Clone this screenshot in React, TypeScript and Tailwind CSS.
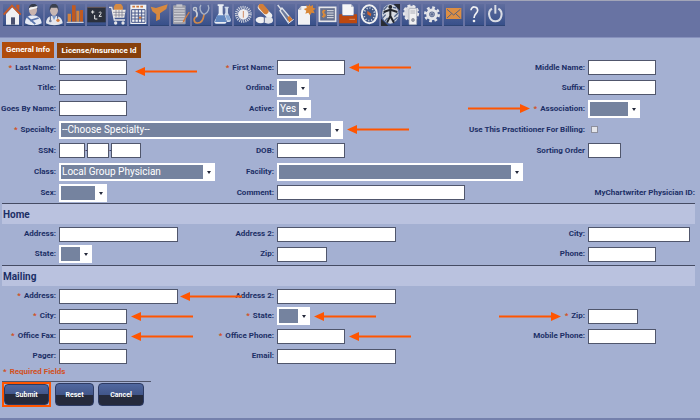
import type { ReactNode } from "react";

const toolbar: { name: string; art: ReactNode }[] = [
  {
    name: "Home",
    art: (
      <>
        <path d="M9 30 L28 10 L48 30 V62 H9 Z" fill="#f1f1f3" />
        <path d="M24 40 h12 v22 h-12 Z" fill="#4a5170" />
        <path d="M2 32 L27 5 L53 32" fill="none" stroke="#c85a26" strokeWidth="6" />
        <path d="M40 2 h9 v18 l-9 -8 Z" fill="#c85a26" />
      </>
    ),
  },
  {
    name: "Patients",
    art: (
      <>
        <path d="M3 58 C3 42 12 34 26 34 C42 34 52 42 53 58 C40 66 16 66 3 58 Z" fill="#e7ebf5" />
        <path d="M8 38 L34 60 M18 50 L44 42" stroke="#5b76ad" strokeWidth="5" fill="none" />
        <ellipse cx="27" cy="18" rx="12" ry="16" fill="#c9b4ae" />
        <path d="M14 16 C14 -6 41 -6 41 14 L36 10 L20 8 Z" fill="#343a48" />
        <path d="M15 12 L40 6 V12 L16 18 Z" fill="#f4f4f4" />
      </>
    ),
  },
  {
    name: "Practitioners",
    art: (
      <>
        <path d="M3 58 C3 42 12 35 27 35 C42 35 52 42 53 58 C40 66 16 66 3 58 Z" fill="#e4e6ec" />
        <path d="M21 35 L27 48 L34 35 Z" fill="#7c98c8" />
        <path d="M16 36 V48 M38 36 V44" stroke="#4d587a" strokeWidth="3" />
        <circle cx="39" cy="49" r="5" fill="#d77c3e" />
        <circle cx="16" cy="51" r="4" fill="#6c7898" />
        <ellipse cx="27" cy="19" rx="12" ry="16" fill="#c9b8b4" />
        <path d="M14 20 C10 -8 44 -8 40 20 L37 11 H18 Z" fill="#3b414e" />
      </>
    ),
  },
  {
    name: "Reports",
    art: (
      <>
        <path d="M5 29 h10 v24 h-10 Z M31 20 h9 v33 h-9 Z" fill="#d2843f" />
        <path d="M18 4 h11 v49 h-11 Z M42 18 h9 v35 h-9 Z" fill="#c05a20" />
        <path d="M2 55 h51" stroke="#e6e6e8" strokeWidth="3" />
      </>
    ),
  },
  {
    name: "Education",
    art: (
      <>
        <rect x="1" y="10" width="55" height="45" fill="#2b303c" />
        <path d="M1 10 h55" stroke="#80614f" strokeWidth="2" />
        <path d="M17 19 v10 M12 24 h10 M23 33 v12 h8 M36 26 c4 -5 8 -1 5 4 l-5 7 h8" fill="none" stroke="#e9e9ea" strokeWidth="3" />
      </>
    ),
  },
  {
    name: "Supplies",
    art: (
      <>
        <circle cx="31" cy="12" r="14" fill="#d58a42" />
        <path d="M3 10 h8 l8 38 h32" fill="none" stroke="#e5e5e8" strokeWidth="4" />
        <path d="M12 17 h41 l-4 24 h-32 Z" fill="#ece9e6" />
        <path d="M15 25 h36 M17 33 h33 M24 18 v22 M33 18 v22 M42 18 v22" stroke="#6e7188" strokeWidth="2" />
        <circle cx="23" cy="57" r="5" fill="#e5e5e8" />
        <circle cx="45" cy="57" r="5" fill="#e5e5e8" />
      </>
    ),
  },
  {
    name: "Calendar",
    art: (
      <>
        <rect x="4" y="2" width="48" height="58" fill="#eff0f3" />
        <path d="M10 8 h36" stroke="#d17a3c" strokeWidth="5" strokeDasharray="8 4" />
        <path d="M8 17 h40 v38 h-40 Z M8 27 h40 M8 36 h40 M8 45 h40 M18 17 v38 M28 17 v38 M38 17 v38" fill="none" stroke="#4a5a8b" strokeWidth="3" />
        <rect x="30" y="38" width="7" height="6" fill="#d17a3c" />
      </>
    ),
  },
  {
    name: "Filters",
    art: <path d="M2 8 L18 12 L53 1 L49 15 L30 28 L30 46 L18 51 L19 31 L7 22 Z" fill="#d6893f" />,
  },
  {
    name: "Charting",
    art: (
      <>
        <rect x="6" y="4" width="38" height="57" rx="3" fill="#9c9da8" />
        <path d="M9 13 h32 M9 21 h32 M9 29 h32 M9 37 h32 M9 45 h32 M9 53 h32" stroke="#d7d7dc" strokeWidth="3" />
        <rect x="16" y="1" width="18" height="7" fill="#c7c7cd" />
        <path d="M55 24 L37 52" stroke="#d07c40" strokeWidth="4" />
        <path d="M38 48 l-4 8 l8 -4 Z" fill="#d07c40" />
      </>
    ),
  },
  {
    name: "Exams",
    art: (
      <>
        <path d="M27 3 C21 10 24 26 36 32 C48 27 54 14 48 3" fill="none" stroke="#a9b3c8" strokeWidth="4" />
        <path d="M36 32 C34 48 26 58 15 57 C4 55 4 42 13 39" fill="none" stroke="#d18a4b" strokeWidth="5" />
        <path d="M13 39 C17 33 15 25 10 19" fill="none" stroke="#cfd2da" strokeWidth="5" />
        <circle cx="9" cy="15" r="7" fill="#c2c6d2" />
        <circle cx="9" cy="15" r="3" fill="#73809c" />
      </>
    ),
  },
  {
    name: "Labs",
    art: (
      <>
        <path d="M14 1 h18 v5 h-3 v22 l10 22 c3 7 -1 9 -6 9 h-22 c-6 0 -8 -4 -6 -9 l12 -22 v-22 h-3 Z" fill="#e9edf4" />
        <path d="M12 34 h22 l6 20 h-34 Z" fill="#5f86bf" />
        <path d="M35 8 h12 v5 h-2 v14 l8 18 c2 6 0 9 -5 9 h-6 l-8 -22 l3 -6 v-13 h-2 Z" fill="#cfdaea" />
        <path d="M37 34 h11 l5 15 h-10 Z" fill="#8aabd6" />
      </>
    ),
  },
  {
    name: "Immunology",
    art: (
      <>
        <circle cx="28" cy="31" r="21" fill="none" stroke="#d6d9e2" strokeWidth="9" strokeDasharray="3 3" />
        <circle cx="28" cy="31" r="16" fill="#eeeef1" />
        <path d="M28 21 v20" stroke="#d18c65" strokeWidth="3" />
      </>
    ),
  },
  {
    name: "Medications",
    art: (
      <>
        <path d="M17 10 L43 35" stroke="#efefef" strokeWidth="17" strokeLinecap="round" />
        <path d="M19 7 L32 22" stroke="#d27e38" strokeWidth="17" strokeLinecap="round" />
        <ellipse cx="17" cy="48" rx="15" ry="10" fill="#f0f0f2" />
        <ellipse cx="40" cy="49" rx="14" ry="10" fill="#e2e3e8" />
        <path d="M28 42 v13" stroke="#59678e" strokeWidth="3" />
      </>
    ),
  },
  {
    name: "Injections",
    art: (
      <>
        <path d="M5 3 L17 18" stroke="#dde0e6" strokeWidth="4" />
        <path d="M18 12 L12 20 L36 55 L46 45 Z" fill="#6d7b9d" stroke="#dfe3ea" strokeWidth="4" />
        <path d="M34 40 L41 36 L50 47 L40 57 Z" fill="#d27a34" />
        <path d="M36 59 L53 46" stroke="#e6e6ea" strokeWidth="3" />
      </>
    ),
  },
  {
    name: "New Document",
    art: (
      <>
        <path d="M3 18 L13 6 H39 V62 H3 Z" fill="#f1f1f3" />
        <path d="M3 18 H13 V6 Z" fill="#bcbfcc" />
        <path d="M36 -1 L40 7 L48 3 L48 11 L56 14 L49 19 L53 28 L44 26 L39 34 L34 26 L25 29 L28 20 L20 15 L29 12 L28 3 L35 7 Z" fill="#d88635" />
      </>
    ),
  },
  {
    name: "Billing",
    art: (
      <>
        <rect x="4" y="10" width="49" height="42" fill="#66718f" stroke="#e5e5e9" strokeWidth="5" />
        <path d="M22 21 c-6 -5 -11 2 -6 7 c7 2 9 11 -4 9 M17 17 v24" fill="none" stroke="#d98a3b" strokeWidth="4" />
        <path d="M27 20 h20 M27 27 h20 M27 34 h20 M27 41 h20" stroke="#dedfe4" strokeWidth="3" />
      </>
    ),
  },
  {
    name: "Print",
    art: (
      <>
        <path d="M10 1 H36 L44 9 V34 H10 Z" fill="#f6f6f7" />
        <path d="M36 1 V9 H44 Z" fill="#b9bdca" />
        <path d="M1 31 H10 V36 H44 V31 H54 V58 H1 Z" fill="#bd480f" />
        <path d="M31 46 h17" stroke="#db9066" strokeWidth="3" />
      </>
    ),
  },
  {
    name: "Navigator",
    art: (
      <>
        <ellipse cx="28" cy="31" rx="23" ry="27" fill="#415887" stroke="#f0f0f2" strokeWidth="6" />
        <ellipse cx="28" cy="31" rx="16" ry="19" fill="none" stroke="#dfe2ea" strokeWidth="5" strokeDasharray="3 6" />
        <path d="M22 20 L34 29 L32 37 L22 31 Z" fill="#d2642b" />
      </>
    ),
  },
  {
    name: "Anatomy",
    art: (
      <>
        <path d="M34 -4 h23 v24 Z M0 44 L22 66 H0 Z" fill="#272b34" />
        <ellipse cx="28" cy="30" rx="25" ry="29" fill="#d7dbe2" />
        <path d="M8 18 L20 5 M6 30 L14 22 M5 42 L14 32 M12 51 L20 42 M36 52 L50 40 M40 38 L52 26 M36 10 L46 12" stroke="#53668a" strokeWidth="4" />
        <circle cx="28" cy="9" r="6" fill="#22262e" />
        <path d="M8 24 L25 18 H31 L49 24 M28 18 V36 L18 56 M28 36 L39 56" fill="none" stroke="#22262e" strokeWidth="6" />
      </>
    ),
  },
  {
    name: "System",
    art: (
      <>
        <ellipse cx="27" cy="27" rx="21" ry="22" fill="#d9dae0" stroke="#e7e7eb" strokeWidth="7" strokeDasharray="9 6" />
        <rect x="21" y="14" width="23" height="48" rx="2" fill="#f1f1f2" stroke="#9ca0ad" strokeWidth="2" />
        <path d="M25 21 h15 M25 27 h15" stroke="#8b8e9b" strokeWidth="2" />
        <circle cx="33" cy="48" r="5" fill="#65697a" />
        <circle cx="33" cy="48" r="2" fill="#f1f1f2" />
      </>
    ),
  },
  {
    name: "Settings",
    art: (
      <>
        <circle cx="27" cy="31" r="20" fill="none" stroke="#e4e5e9" strokeWidth="8" strokeDasharray="8 7.7" />
        <circle cx="27" cy="31" r="13" fill="#5b6a91" stroke="#e4e5e9" strokeWidth="9" />
        <circle cx="27" cy="31" r="5" fill="none" stroke="#b4b9c8" strokeWidth="2" />
      </>
    ),
  },
  {
    name: "Messages",
    art: (
      <>
        <rect x="6" y="12" width="46" height="33" fill="#dc8e43" />
        <path d="M9 16 L29 33 L49 16 M9 42 L23 29 M49 42 L35 29" fill="none" stroke="#58617f" strokeWidth="3" />
      </>
    ),
  },
  {
    name: "Help",
    art: (
      <>
        <path d="M18 19 C18 5 38 6 38 19 C38 28 27 29 27 42" fill="none" stroke="#f1f1f3" strokeWidth="5" />
        <circle cx="27" cy="51" r="4" fill="#f1f1f3" />
      </>
    ),
  },
  {
    name: "Log Out",
    art: (
      <>
        <path d="M18 14 C2 24 10 52 28 52 C47 52 54 24 37 14" fill="none" stroke="#d9dce4" strokeWidth="6" />
        <path d="M28 3 V29" stroke="#d9dce4" strokeWidth="6" />
      </>
    ),
  },
];

function Arrow({ right = false, className = "" }: { right?: boolean; className?: string }) {
  return (
    <svg viewBox="0 0 62 11" className={`h-[11px] w-[62px] shrink-0 ${className}`} aria-hidden="true">
      {right ? (
        <path d="M0 4.5 H52 V1 L62 5.5 L52 10 V6.5 H0 Z" fill="#ff5500" />
      ) : (
        <path d="M62 4.5 H10 V1 L0 5.5 L10 10 V6.5 H62 Z" fill="#ff5500" />
      )}
    </svg>
  );
}

type LabelProps = { id: string; children: ReactNode; required?: boolean; arrow?: boolean; className?: string };

function Label({ id, children, required, arrow, className = "" }: LabelProps) {
  return (
    <div className={`flex items-center justify-end gap-1 whitespace-nowrap ${className}`}>
      {arrow && <Arrow right />}
      <label htmlFor={id}>
        {required && <span className="mr-[3px] text-[#d2501e]">*</span>}
        {children}
      </label>
    </div>
  );
}

function TextBox({ id, width = "w-[68px]", label }: { id: string; width?: string; label?: string }) {
  return (
    <input
      id={id}
      type="text"
      aria-label={label}
      className={`h-[15px] shrink-0 border border-[#50566c] bg-white px-1 text-[8px] ${width}`}
    />
  );
}

function Select({ id, width, value = "" }: { id: string; width: string; value?: string }) {
  return (
    <div className={`relative h-[18px] shrink-0 bg-white py-[2px] pr-3 pl-[2px] ${width}`}>
      <select
        id={id}
        className="block h-[14px] w-full appearance-none bg-[#75839f] pl-px text-[10px] leading-[14px] font-normal text-white"
      >
        <option>{value}</option>
      </select>
      <svg viewBox="0 0 4 3" className="pointer-events-none absolute top-2 right-1 h-[3px] w-1">
        <path d="M0 0 H4 L2 3 Z" fill="#23283a" />
      </svg>
    </div>
  );
}

function Field({ children, className = "" }: { children: ReactNode; className?: string }) {
  return <div className={`flex min-w-0 items-center ${className}`}>{children}</div>;
}

function SectionTitle({ children }: { children: ReactNode }) {
  return (
    <h2 className="mr-[5px] ml-[2px] h-[21px] border-t border-[#454b63] bg-[#bac2df] pt-[3px] pl-px text-[10px] leading-4 font-bold">
      {children}
    </h2>
  );
}

type ActionButtonProps = { children: string; size: string; type?: "button" | "submit" | "reset" };

function ActionButton({ children, size, type = "button" }: ActionButtonProps) {
  return (
    <button
      type={type}
      className={`rounded-[4px] border border-[#2c3a63] bg-linear-to-b from-[#5068a0] from-0% via-[#42568a] via-50% to-[#252a3c] to-50% text-[7px] font-bold text-white ${size}`}
    >
      {children}
    </button>
  );
}

const columns =
  "grid grid-cols-[56px_minmax(0,158fr)_54px_minmax(0,189fr)_116px_minmax(0,107fr)] gap-x-[3px] pr-[5px]";

export default function App() {
  return (
    <div className="flex min-h-screen flex-col border-b-2 border-[#7480ac] bg-[#a4b0d2] font-[Roboto,'Liberation_Sans',sans-serif] text-[8px] leading-3 font-bold text-[#1c2f66]">
      <header className="h-[38px] border-t border-b border-t-[#a2a5b8] border-b-[#8791bd] bg-[#6873a3] pt-[3px] pl-[3px]">
        <nav className="flex gap-[2px]" aria-label="Main">
          {toolbar.map(({ name, art }) => (
            <button
              key={name}
              type="button"
              aria-label={name}
              className="h-[22px] w-[19px] border-b border-[#2f4575] bg-linear-to-b from-[#5f6d9e] to-[#38508a]"
            >
              <svg viewBox="0 0 57 66" className="block h-[22px] w-[19px]">
                {art}
              </svg>
            </button>
          ))}
        </nav>
      </header>

      <div className="flex h-5 items-end gap-[3px] pl-[2px] text-white">
        <button type="button" className="h-4 w-[52px] bg-[#b04c0c] whitespace-nowrap">
          General Info
        </button>
        <button type="button" className="h-[15px] w-[84px] bg-[#87400c] whitespace-nowrap">
          License/Insurance Id
        </button>
      </div>

      <form className="flex-1" onSubmit={(e) => e.preventDefault()}>
        <div className={`${columns} grid-rows-[19px_repeat(6,21px)]`}>
          <Label id="lastName" required>Last Name:</Label>
          <Field>
            <TextBox id="lastName" />
            <Arrow className="ml-2 self-end" />
          </Field>
          <Label id="firstName" required>First Name:</Label>
          <Field>
            <TextBox id="firstName" />
            <Arrow className="ml-1" />
          </Field>
          <Label id="middleName">Middle Name:</Label>
          <Field><TextBox id="middleName" /></Field>

          <Label id="title">Title:</Label>
          <Field><TextBox id="title" /></Field>
          <Label id="ordinal">Ordinal:</Label>
          <Field><Select id="ordinal" width="w-8" /></Field>
          <Label id="suffix">Suffix:</Label>
          <Field><TextBox id="suffix" /></Field>

          <Label id="goesBy">Goes By Name:</Label>
          <Field><TextBox id="goesBy" /></Field>
          <Label id="active">Active:</Label>
          <Field><Select id="active" width="w-[34px]" value="Yes" /></Field>
          <Label id="association" required arrow>Association:</Label>
          <Field><Select id="association" width="w-[52px]" /></Field>

          <Label id="specialty" required>Specialty:</Label>
          <Field className="col-span-3">
            <Select id="specialty" width="w-[284px]" value="--Choose Specialty--" />
            <Arrow className="ml-1" />
          </Field>
          <Label id="billing">Use This Practitioner For Billing:</Label>
          <Field>
            <input id="billing" type="checkbox" className="ml-[3px] size-[7px] appearance-none border border-[#8d8f9d] bg-[#e4e5ea] checked:bg-[#1c2f66]" />
          </Field>

          <Label id="ssn1">SSN:</Label>
          <Field>
            <TextBox id="ssn1" width="w-[26px]" />
            <span className="w-[2px] overflow-hidden">-</span>
            <TextBox id="ssn2" width="w-[22px]" label="SSN middle digits" />
            <span className="w-[2px] overflow-hidden">-</span>
            <TextBox id="ssn3" width="w-[30px]" label="SSN last digits" />
          </Field>
          <Label id="dob">DOB:</Label>
          <Field><TextBox id="dob" /></Field>
          <Label id="sorting">Sorting Order</Label>
          <Field><TextBox id="sorting" width="w-[33px]" /></Field>

          <Label id="class">Class:</Label>
          <Field><Select id="class" width="w-[156px]" value="Local Group Physician" /></Field>
          <Label id="facility">Facility:</Label>
          <Field className="col-span-3"><Select id="facility" width="w-[246px]" /></Field>

          <Label id="sex">Sex:</Label>
          <Field><Select id="sex" width="w-12" /></Field>
          <Label id="comment">Comment:</Label>
          <Field><TextBox id="comment" width="w-[188px]" /></Field>
          <div className="col-span-2 flex items-center justify-end whitespace-nowrap">
            MyChartwriter Physician ID:
          </div>
        </div>

        <SectionTitle>Home</SectionTitle>
        <div className={`${columns} auto-rows-[20px] pb-px`}>
          <Label id="homeAddress">Address:</Label>
          <Field><TextBox id="homeAddress" width="w-[119px]" /></Field>
          <Label id="homeAddress2">Address 2:</Label>
          <Field><TextBox id="homeAddress2" width="w-[119px]" /></Field>
          <Label id="homeCity">City:</Label>
          <Field><TextBox id="homeCity" width="w-[102px]" /></Field>

          <Label id="homeState">State:</Label>
          <Field><Select id="homeState" width="w-[33px]" /></Field>
          <Label id="homeZip">Zip:</Label>
          <Field><TextBox id="homeZip" width="w-[50px]" /></Field>
          <Label id="homePhone">Phone:</Label>
          <Field><TextBox id="homePhone" /></Field>
        </div>

        <SectionTitle>Mailing</SectionTitle>
        <div className={`${columns} auto-rows-[20px]`}>
          <Label id="mailAddress" required>Address:</Label>
          <Field>
            <TextBox id="mailAddress" width="w-[119px]" />
            <Arrow className="z-10 ml-[2px]" />
          </Field>
          <Label id="mailAddress2">Address 2:</Label>
          <Field className="col-span-3"><TextBox id="mailAddress2" width="w-[119px]" /></Field>

          <Label id="mailCity" required>City:</Label>
          <Field>
            <TextBox id="mailCity" />
            <Arrow className="ml-1" />
          </Field>
          <Label id="mailState" required>State:</Label>
          <Field>
            <Select id="mailState" width="w-[33px]" />
            <Arrow className="ml-1" />
          </Field>
          <Label id="mailZip" required arrow>Zip:</Label>
          <Field><TextBox id="mailZip" width="w-[50px]" /></Field>

          <Label id="officeFax" required>Office Fax:</Label>
          <Field>
            <TextBox id="officeFax" />
            <Arrow className="ml-1" />
          </Field>
          <Label id="officePhone" required>Office Phone:</Label>
          <Field>
            <TextBox id="officePhone" />
            <Arrow className="ml-1" />
          </Field>
          <Label id="mobilePhone">Mobile Phone:</Label>
          <Field><TextBox id="mobilePhone" /></Field>

          <Label id="pager">Pager:</Label>
          <Field><TextBox id="pager" /></Field>
          <Label id="email">Email:</Label>
          <Field><TextBox id="email" width="w-[119px]" /></Field>
        </div>

        <p className="h-[15px] pl-[3px] text-[#d2501e]">
          <span className="mr-[3px]">*</span>Required Fields
        </p>
        <div className="ml-[2px] flex w-[149px] items-center gap-1 border-t border-[#50566c]">
          <div className="flex border-2 border-[#ff5500]">
            <ActionButton type="submit" size="h-[21px] w-[45px]">Submit</ActionButton>
          </div>
          <ActionButton type="reset" size="h-[23px] w-[39px]">Reset</ActionButton>
          <ActionButton size="h-[23px] w-[46px]">Cancel</ActionButton>
        </div>
      </form>
    </div>
  );
}
